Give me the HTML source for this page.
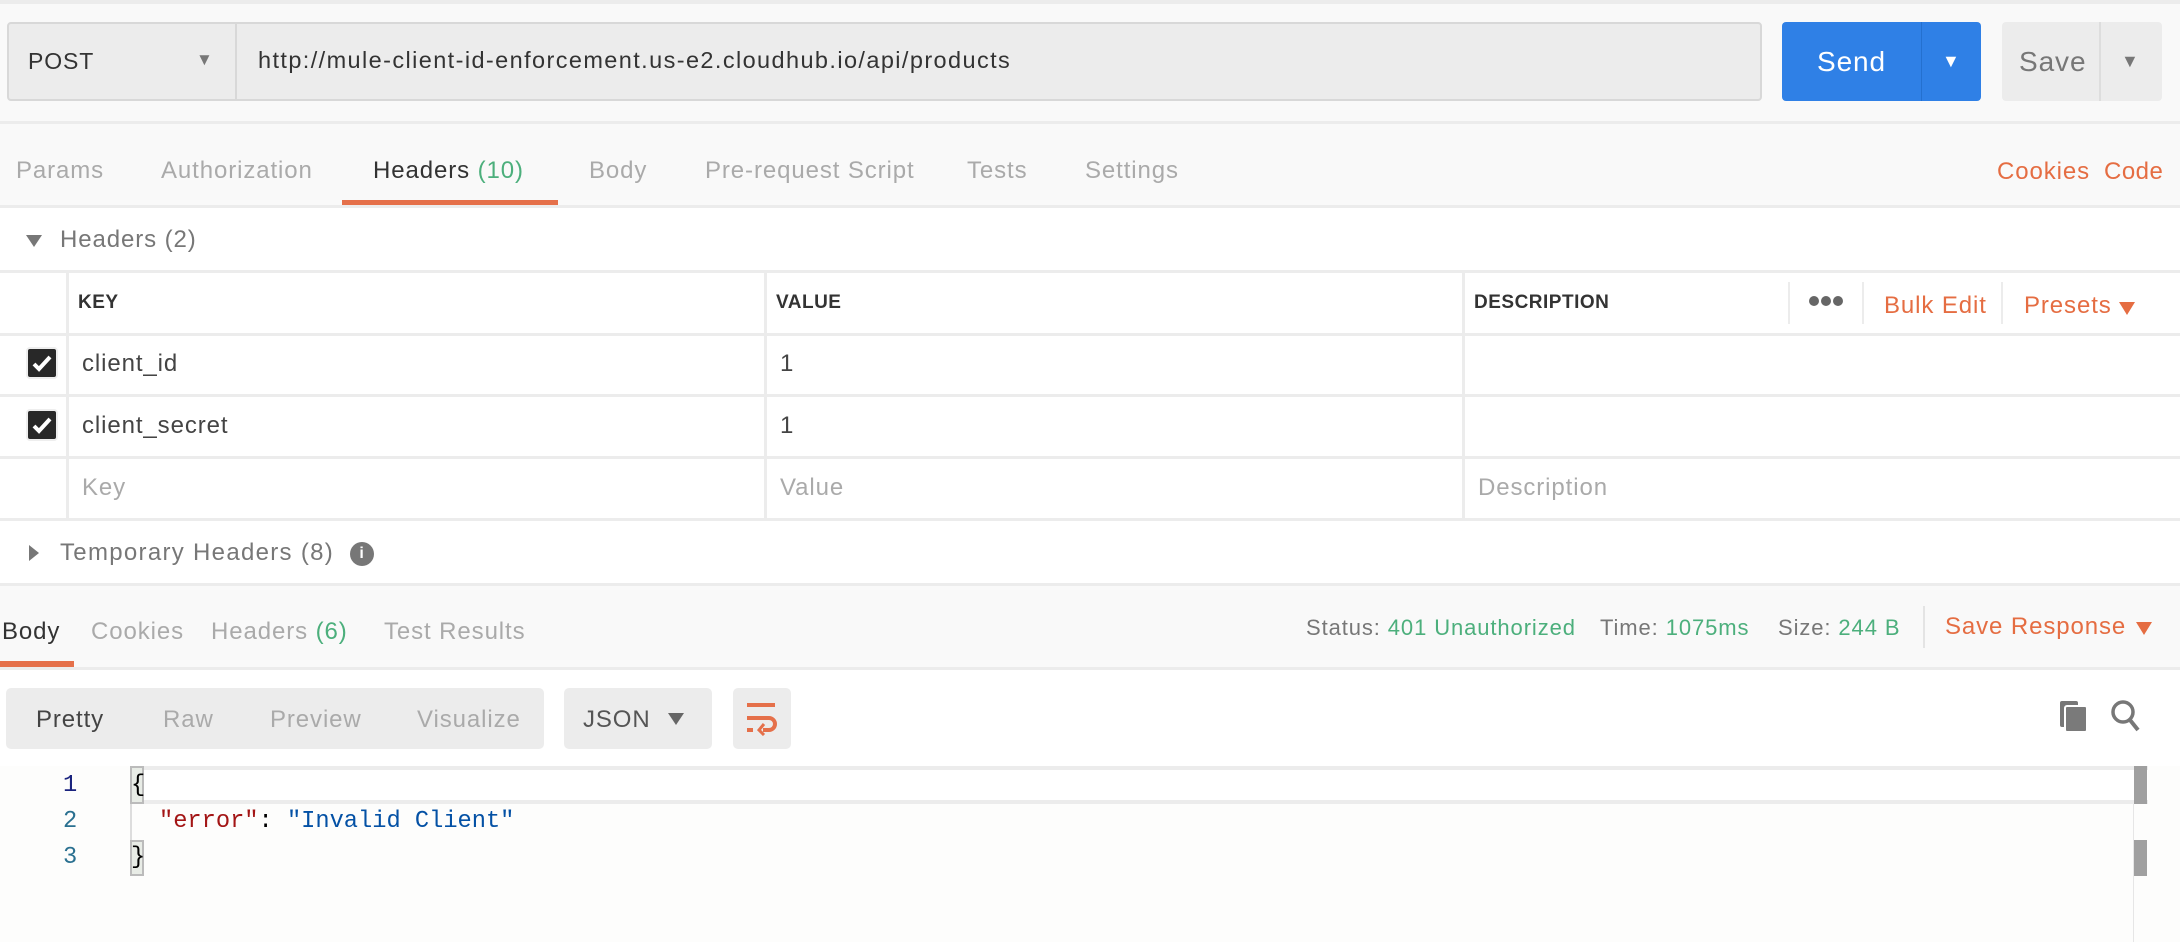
<!DOCTYPE html>
<html><head><meta charset="utf-8"><style>
*{box-sizing:border-box;margin:0;padding:0}
body{width:2180px;height:942px;overflow:hidden;background:#fff;font-family:"Liberation Sans",sans-serif;position:relative;color:#505050;letter-spacing:0.9px}
.a{position:absolute;white-space:nowrap}
.hl{position:absolute;left:0;width:2180px;height:3px;background:#ececec}
.vl{position:absolute;width:3px;background:#ececec}
.or{color:#e56d42}
.gr{color:#4caf7c}
.cb{position:absolute;left:26px;width:32px;height:32px;background:#282828;border-radius:4px;border:2px solid #eee}
.m{font-family:'Liberation Mono',monospace;font-size:23.7px;letter-spacing:0}
</style></head><body>
<div class="a" style="left:0;top:0;width:2180px;height:122px;background:#f9f9f9"></div>
<div class="hl" style="top:0;height:4px"></div>
<div class="a" style="left:7px;top:22px;width:1755px;height:79px;background:#ececec;border:2px solid #d8d8d8;border-radius:4px"></div>
<div class="a" style="left:235px;top:24px;width:2px;height:75px;background:#d8d8d8"></div>
<div class="a" style="left:28px;top:48px;font-size:23px;color:#333">POST</div>
<div class="a" style="left:196px;top:50px;font-size:17px;color:#777">▼</div>
<div class="a" style="left:258px;top:47px;font-size:23.5px;letter-spacing:1.4px;color:#333">http://mule-client-id-enforcement.us-e2.cloudhub.io/api/products</div>
<div class="a" style="left:1782px;top:22px;width:199px;height:79px;background:#2f80e6;border-radius:4px"></div>
<div class="a" style="left:1921px;top:22px;width:1px;height:79px;background:#2470cf"></div>
<div class="a" style="left:1817px;top:46px;font-size:28px;color:#fff">Send</div>
<div class="a" style="left:1942px;top:51px;font-size:18px;color:#fff">▼</div>
<div class="a" style="left:2002px;top:22px;width:160px;height:79px;background:#ececec;border-radius:4px"></div>
<div class="a" style="left:2099px;top:22px;width:2px;height:79px;background:#ddd"></div>
<div class="a" style="left:2019px;top:46px;font-size:28px;color:#777">Save</div>
<div class="a" style="left:2121px;top:51px;font-size:18px;color:#777">▼</div>
<div class="hl" style="top:121px"></div>
<div class="a" style="left:0;top:124px;width:2180px;height:82px;background:#f9f9f9"></div>
<div class="a" style="left:16px;top:157px;font-size:24px;color:#aaa">Params</div>
<div class="a" style="left:161px;top:157px;font-size:24px;color:#aaa">Authorization</div>
<div class="a" style="left:373px;top:157px;font-size:24px;color:#333">Headers <span class="gr">(10)</span></div>
<div class="a" style="left:589px;top:157px;font-size:24px;color:#aaa">Body</div>
<div class="a" style="left:705px;top:157px;font-size:24px;color:#aaa">Pre-request Script</div>
<div class="a" style="left:967px;top:157px;font-size:24px;color:#aaa">Tests</div>
<div class="a" style="left:1085px;top:157px;font-size:24px;color:#aaa">Settings</div>
<div class="a or" style="left:1997px;top:158px;font-size:24px">Cookies</div>
<div class="a or" style="left:2104px;top:158px;font-size:24px;letter-spacing:0.5px">Code</div>
<div class="a" style="left:342px;top:200px;width:216px;height:6px;background:#e5704a"></div>
<div class="hl" style="top:205px"></div>
<div class="a" style="left:26px;top:235px;width:0;height:0;border-top:12px solid #777;border-left:8px solid transparent;border-right:8px solid transparent"></div>
<div class="a" style="left:60px;top:226px;font-size:24px;color:#777">Headers (2)</div>
<div class="hl" style="top:270px"></div>
<div class="hl" style="top:333px"></div>
<div class="hl" style="top:394px"></div>
<div class="hl" style="top:456px"></div>
<div class="hl" style="top:518px"></div>
<div class="vl" style="left:66px;top:272px;height:248px"></div>
<div class="vl" style="left:764px;top:272px;height:248px"></div>
<div class="vl" style="left:1462px;top:272px;height:248px"></div>
<div class="a" style="left:1788px;top:282px;width:2px;height:42px;background:#ececec"></div>
<div class="a" style="left:1862px;top:282px;width:2px;height:42px;background:#ececec"></div>
<div class="a" style="left:2001px;top:282px;width:2px;height:42px;background:#ececec"></div>
<div class="a" style="left:78px;top:292px;font-size:19px;font-weight:bold;color:#333;letter-spacing:0.5px">KEY</div>
<div class="a" style="left:776px;top:292px;font-size:19px;font-weight:bold;color:#333;letter-spacing:0.5px">VALUE</div>
<div class="a" style="left:1474px;top:292px;font-size:19px;font-weight:bold;color:#333;letter-spacing:0.5px">DESCRIPTION</div>
<svg class="a" style="left:1808px;top:295px" width="36" height="12"><circle cx="6" cy="6" r="5" fill="#666"/><circle cx="18" cy="6" r="5" fill="#666"/><circle cx="30" cy="6" r="5" fill="#666"/></svg>
<div class="a or" style="left:1884px;top:292px;font-size:24px">Bulk Edit</div>
<div class="a or" style="left:2024px;top:292px;font-size:24px">Presets</div>
<div class="a" style="left:2119px;top:302px;width:0;height:0;border-top:13px solid #e56d42;border-left:8px solid transparent;border-right:8px solid transparent"></div>
<div class="cb" style="top:347px"><svg width="28" height="28" viewBox="0 0 28 28"><path d="M6 15l5 5 11-12" stroke="#fff" stroke-width="4" fill="none"/></svg></div>
<div class="cb" style="top:409px"><svg width="28" height="28" viewBox="0 0 28 28"><path d="M6 15l5 5 11-12" stroke="#fff" stroke-width="4" fill="none"/></svg></div>
<div class="a" style="left:82px;top:350px;font-size:24px;color:#444">client_id</div>
<div class="a" style="left:780px;top:350px;font-size:24px;color:#444">1</div>
<div class="a" style="left:82px;top:412px;font-size:24px;color:#444">client_secret</div>
<div class="a" style="left:780px;top:412px;font-size:24px;color:#444">1</div>
<div class="a" style="left:82px;top:474px;font-size:24px;color:#aaa">Key</div>
<div class="a" style="left:780px;top:474px;font-size:24px;color:#aaa">Value</div>
<div class="a" style="left:1478px;top:474px;font-size:24px;color:#aaa">Description</div>
<div class="a" style="left:29px;top:545px;width:0;height:0;border-left:10px solid #777;border-top:8px solid transparent;border-bottom:8px solid transparent"></div>
<div class="a" style="left:60px;top:539px;font-size:24px;color:#777;letter-spacing:1.3px">Temporary Headers (8)</div>
<div class="a" style="left:350px;top:542px;width:24px;height:24px;border-radius:12px;background:#777;color:#fff;font-size:16px;font-weight:bold;text-align:center;line-height:24px">i</div>
<div class="hl" style="top:583px"></div>
<div class="a" style="left:0;top:586px;width:2180px;height:82px;background:#f9f9f9"></div>
<div class="a" style="left:2px;top:618px;font-size:24px;color:#333">Body</div>
<div class="a" style="left:91px;top:618px;font-size:24px;color:#aaa">Cookies</div>
<div class="a" style="left:211px;top:618px;font-size:24px;color:#aaa">Headers <span class="gr">(6)</span></div>
<div class="a" style="left:384px;top:618px;font-size:24px;color:#aaa">Test Results</div>
<div class="a" style="left:1306px;top:615px;font-size:22px;color:#777">Status: <span class="gr">401 Unauthorized</span></div>
<div class="a" style="left:1600px;top:615px;font-size:22px;color:#777">Time: <span class="gr">1075ms</span></div>
<div class="a" style="left:1778px;top:615px;font-size:22px;color:#777">Size: <span class="gr">244 B</span></div>
<div class="a" style="left:1923px;top:606px;width:2px;height:42px;background:#e4e4e4"></div>
<div class="a or" style="left:1945px;top:613px;font-size:24px">Save Response</div>
<div class="a" style="left:2136px;top:622px;width:0;height:0;border-top:13px solid #e56d42;border-left:8px solid transparent;border-right:8px solid transparent"></div>
<div class="a" style="left:0;top:661px;width:74px;height:6px;background:#e5704a"></div>
<div class="hl" style="top:667px"></div>
<div class="a" style="left:6px;top:688px;width:538px;height:61px;background:#ececec;border-radius:5px"></div>
<div class="a" style="left:36px;top:706px;font-size:24px;color:#444">Pretty</div>
<div class="a" style="left:163px;top:706px;font-size:24px;color:#aaa">Raw</div>
<div class="a" style="left:270px;top:706px;font-size:24px;color:#aaa">Preview</div>
<div class="a" style="left:417px;top:706px;font-size:24px;color:#aaa">Visualize</div>
<div class="a" style="left:564px;top:688px;width:148px;height:61px;background:#ececec;border-radius:5px"></div>
<div class="a" style="left:583px;top:706px;font-size:24px;color:#555">JSON</div>
<div class="a" style="left:668px;top:713px;width:0;height:0;border-top:12px solid #666;border-left:8px solid transparent;border-right:8px solid transparent"></div>
<div class="a" style="left:733px;top:688px;width:58px;height:61px;background:#ececec;border-radius:5px"></div>
<svg class="a" style="left:745px;top:702px" width="34" height="34" viewBox="0 0 34 34"><path d="M2 3h28M2 16h22a6 6 0 0 1 0 12h-6" stroke="#e5704a" stroke-width="4" fill="none"/><path d="M19 22l-5 6 5 5" stroke="#e5704a" stroke-width="3" fill="none"/><path d="M2 28h6" stroke="#e5704a" stroke-width="4"/></svg>
<svg class="a" style="left:2059px;top:699px" width="32" height="34" viewBox="0 0 32 34"><rect x="1" y="2" width="18" height="26" rx="2" fill="#777"/><rect x="6" y="7" width="22" height="26" rx="2" fill="#7a7a7a" stroke="#fff" stroke-width="2"/></svg>
<svg class="a" style="left:2110px;top:699px" width="32" height="34" viewBox="0 0 32 34"><circle cx="13" cy="13" r="10" stroke="#777" stroke-width="3.5" fill="none"/><path d="M20 21l8 10" stroke="#777" stroke-width="4"/></svg>
<div class="a" style="left:0;top:766px;width:2180px;height:176px;background:#fdfdfc"></div>
<div class="a" style="left:130px;top:766px;width:2018px;height:38px;background:#fff;border-top:4px solid #ececec;border-bottom:4px solid #ececec"></div>
<div class="a" style="left:130px;top:766px;width:14px;height:38px;background:#e8ece6;border:2px solid #bbb"></div>
<div class="a" style="left:130px;top:840px;width:14px;height:36px;background:#e8ece6;border:2px solid #bbb"></div>
<div class="a" style="left:130px;top:804px;width:2px;height:36px;background:#ddd"></div>
<div class="a" style="left:2134px;top:766px;width:13px;height:38px;background:#a0a0a0"></div>
<div class="a" style="left:2134px;top:840px;width:13px;height:36px;background:#a0a0a0"></div>
<div class="a" style="left:2133px;top:804px;width:1px;height:138px;background:#e6e6e6"></div>
<div class="a m" style="left:63px;top:772px;color:#1a237e">1</div>
<div class="a m" style="left:63px;top:808px;color:#2a7090">2</div>
<div class="a m" style="left:63px;top:844px;color:#2a7090">3</div>
<div class="a m" style="left:131px;top:772px;color:#000">{</div>
<div class="a m" style="left:159px;top:808px;color:#000"><span style="color:#a31515">"error"</span>: <span style="color:#0451a5">"Invalid Client"</span></div>
<div class="a m" style="left:131px;top:844px;color:#000">}</div>
</body></html>
